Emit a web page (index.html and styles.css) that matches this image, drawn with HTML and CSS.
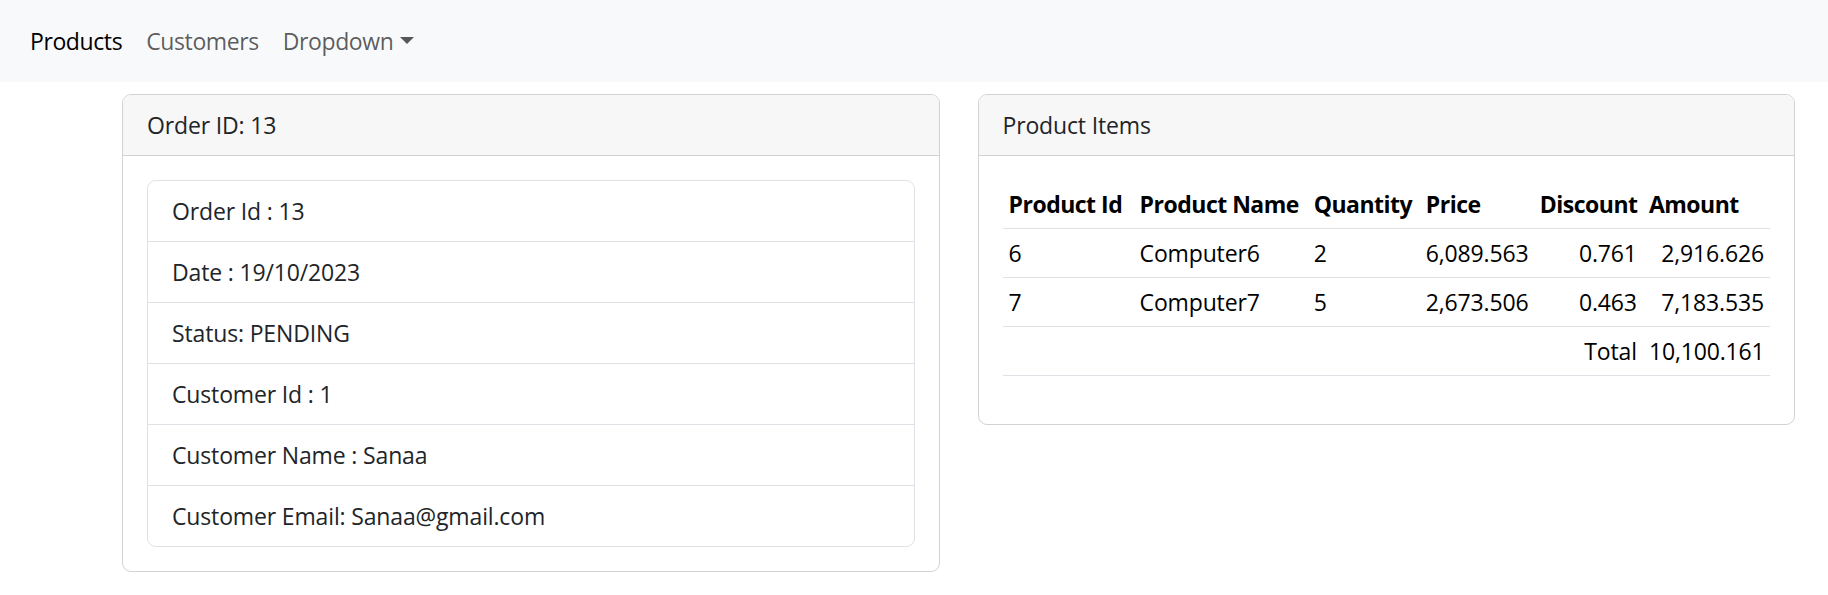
FILE: index.html
```html
<!DOCTYPE html>
<html lang="en">
<head>
<meta charset="utf-8">
<title>Order</title>
<link rel="stylesheet" href="styles.css">
</head>
<body>
<nav class="navbar">
  <ul class="nav">
    <li><a class="nav-link active" href="#">Products</a></li>
    <li><a class="nav-link" href="#">Customers</a></li>
    <li><a class="nav-link dropdown-toggle" href="#">Dropdown</a></li>
  </ul>
</nav>
<main class="content">
  <section class="card">
    <div class="card-header">Order ID: 13</div>
    <div class="card-body">
      <ul class="list-group">
        <li class="list-item">Order Id : 13</li>
        <li class="list-item">Date : 19/10/2023</li>
        <li class="list-item">Status: PENDING</li>
        <li class="list-item">Customer Id : 1</li>
        <li class="list-item">Customer Name : Sanaa</li>
        <li class="list-item">Customer Email: Sanaa@gmail.com</li>
      </ul>
    </div>
  </section>
  <section class="card">
    <div class="card-header">Product Items</div>
    <div class="card-body">
      <table class="table">
        <colgroup>
          <col class="c1"><col class="c2"><col class="c3"><col class="c4"><col class="c5"><col class="c6">
        </colgroup>
        <thead>
          <tr><th>Product Id</th><th>Product Name</th><th>Quantity</th><th>Price</th><th>Discount</th><th>Amount</th></tr>
        </thead>
        <tbody>
          <tr><td>6</td><td>Computer6</td><td>2</td><td>6,089.563</td><td class="num">0.761</td><td class="num">2,916.626</td></tr>
          <tr><td>7</td><td>Computer7</td><td>5</td><td>2,673.506</td><td class="num">0.463</td><td class="num">7,183.535</td></tr>
          <tr><td></td><td></td><td></td><td></td><td class="num">Total</td><td class="num">10,100.161</td></tr>
        </tbody>
      </table>
    </div>
  </section>
</main>
</body>
</html>
```
FILE: styles.css
```css
* { box-sizing: border-box; }
html, body { margin: 0; padding: 0; }
body {
  font-family: "Segoe UI", "Open Sans", "Noto Sans", sans-serif;
  font-size: 23px;
  letter-spacing: -0.15px;
  line-height: 36px;
  color: #212529;
  background: #fff;
}
.navbar {
  height: 82px;
  background: #f8f9fa;
  display: flex;
  align-items: center;
  padding: 0 18px;
}
.nav {
  list-style: none;
  margin: 0;
  padding: 0;
  display: flex;
  letter-spacing: -0.4px;
}
.nav-link {
  display: block;
  padding: 0 12px;
  color: rgba(0, 0, 0, 0.65);
  text-decoration: none;
}
.nav-link.active { color: #000; }
.dropdown-toggle::after {
  content: "";
  display: inline-block;
  margin-left: 7px;
  vertical-align: 6px;
  border-top: 7px solid;
  border-left: 7px solid transparent;
  border-right: 7px solid transparent;
  border-bottom: 0;
}
.content {
  display: flex;
  align-items: flex-start;
  gap: 38px;
  padding: 12px 33px 0 122px;
}
.card {
  flex: 1 1 0;
  border: 1px solid #d2d2d2;
  border-radius: 9px;
  overflow: hidden;
}
.card-header {
  padding: 12px 24px;
  background: #f7f7f7;
  border-bottom: 1px solid #d2d2d2;
}
.card-body { padding: 24px; }
.list-group {
  list-style: none;
  margin: 0;
  padding: 0;
  border: 1px solid #dee2e6;
  border-radius: 9px;
}
.list-item {
  padding: 12px 24px;
  border-top: 1px solid #dee2e6;
}
.list-item:first-child { border-top: 0; }
.table {
  width: 100%;
  table-layout: fixed;
  border-collapse: collapse;
  margin-bottom: 24px;
  color: #000;
}
.c1 { width: 131px; }
.c2 { width: 174px; }
.c3 { width: 112px; }
.c4 { width: 114px; }
.c5 { width: 109px; }
.c6 { width: 127px; }
.table th, .table td {
  padding: 6px;
  text-align: left;
  white-space: nowrap;
  border-bottom: 1px solid #dee2e6;
}
.table th { font-weight: 700; letter-spacing: -0.5px; }
.table td.num { text-align: right; }
```
